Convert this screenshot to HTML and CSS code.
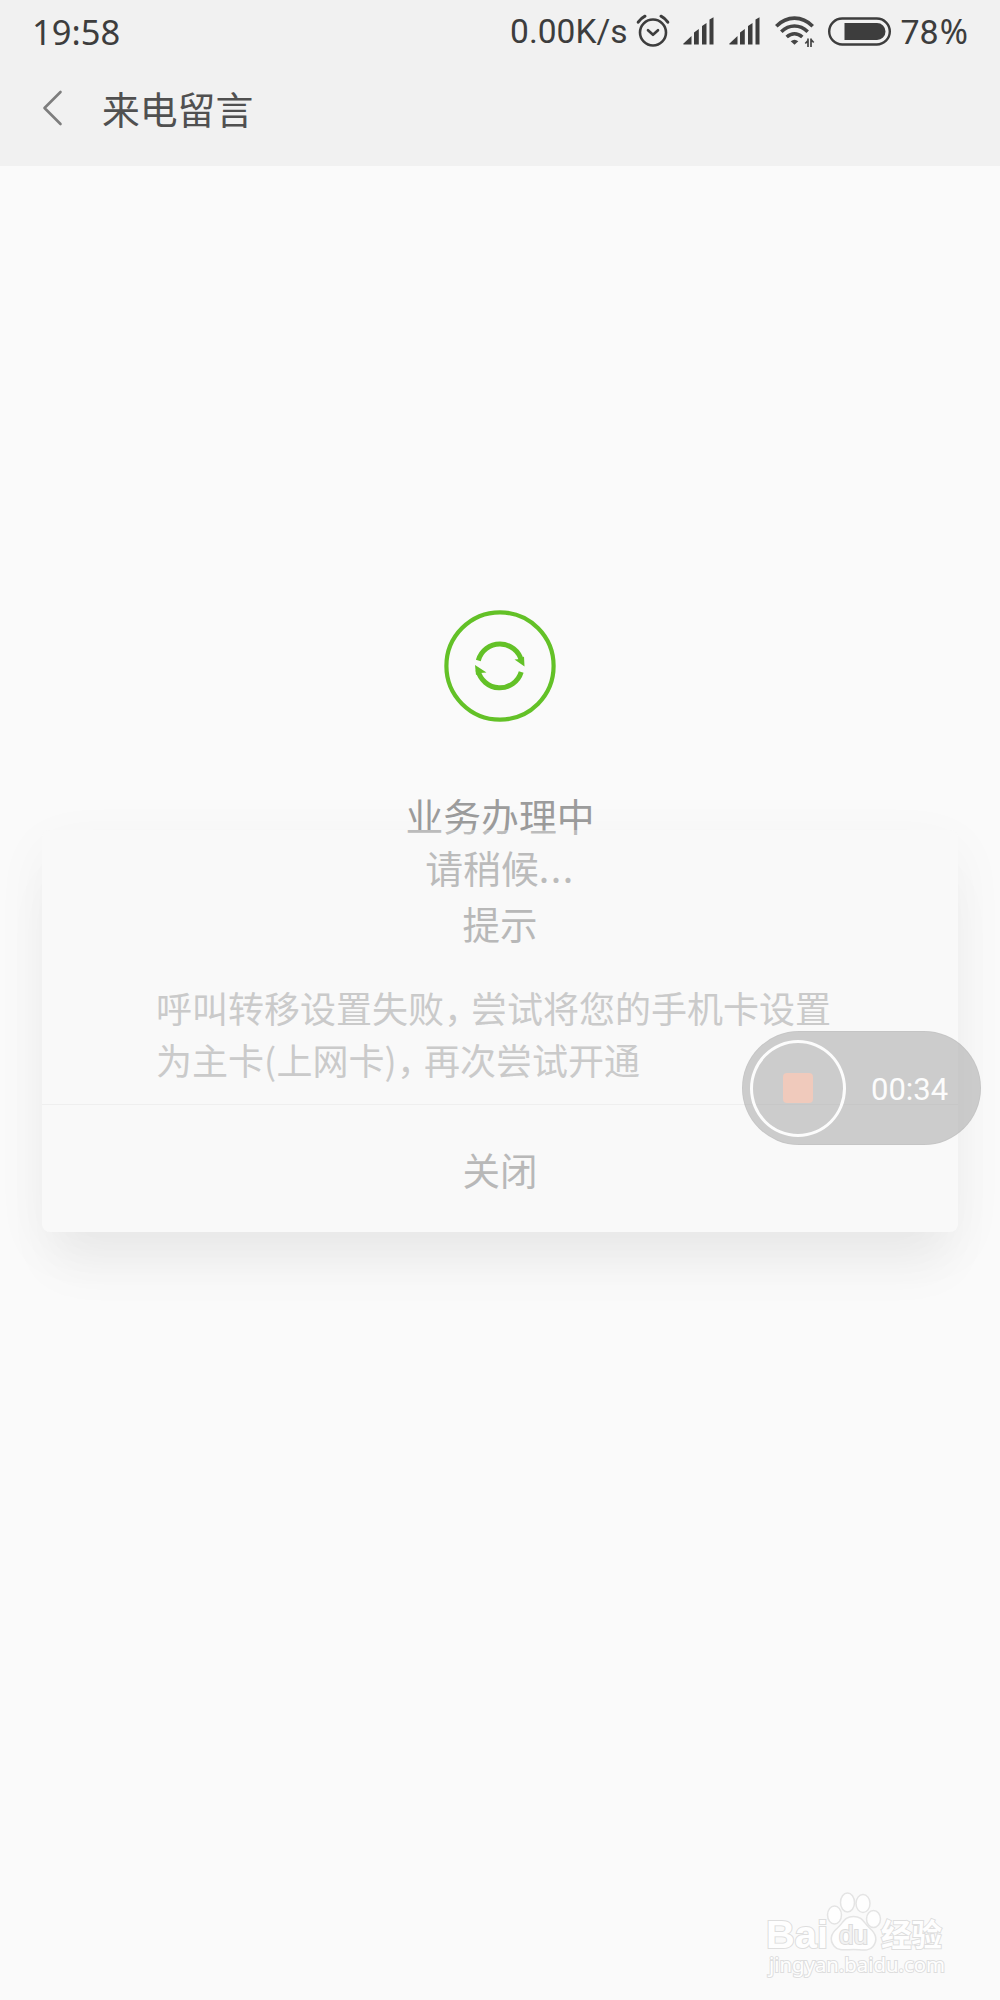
FILE: index.html
```html
<!DOCTYPE html>
<html lang="zh-CN">
<head>
<meta charset="utf-8">
<title>来电留言</title>
<link rel="stylesheet" href="styles.css">
</head>
<body>
<div class="screen">
  <header class="top">
    <div class="status">
      <span class="clock">19:58</span>
      <div class="indicators">
        <span class="speed">0.00K/s</span>
        <svg class="alarm" width="34" height="34" viewBox="0 0 34 34" fill="none" stroke="#3d3d3d" stroke-width="2.6" stroke-linecap="round" stroke-linejoin="round">
          <circle cx="17" cy="18.5" r="13"/>
          <path d="M12 16.2l5 4.600 5-4.600"/>
          <path d="M2.200 8.200q2.800-4 6.800-6M31.800 8.200q-2.800-4-6.800-6" stroke-width="3"/>
        </svg>
        <svg class="signal" width="32" height="28" viewBox="0 0 32 28" fill="#3d3d3d">
          <path d="M0 27l8.500-8v8.500H.8zM11 15.500l4.800-3.500v15.500H11zM19 9l4.500-3v21.500H19zM26.500 2.500L30.500.3v27.200h-4z"/>
        </svg>
        <svg class="signal signal-two" width="32" height="28" viewBox="0 0 32 28" fill="#3d3d3d">
          <path d="M0 27l8.500-8v8.500H.8zM11 15.500l4.800-3.500v15.500H11zM19 9l4.500-3v21.500H19zM26.500 2.500L30.500.3v27.200h-4z"/>
        </svg>
        <svg class="wifi" width="40" height="32" viewBox="0 0 40 32" fill="none" stroke="#454545" stroke-width="3.600">
          <path d="M1.300 10.200C12-.6 27-.6 37.700 10.200M6.300 15.700c7.800-7.600 18.600-7.600 26.400 0M11.700 21c4.900-4.300 10.700-4.300 15.600 0"/>
          <path d="M15.700 25.200q3.800-3 7.600 0l-3.800 3.600z" fill="#454545" stroke="none"/>
          <path d="M30.300 27.500l2.700-3M33 22.500v8.500M36 31v-8.500M36 23.500l2.700 3" stroke-width="1.700"/>
        </svg>
        <svg class="battery" width="64" height="30" viewBox="0 0 64 30">
          <rect x="1.200" y="1.500" width="60.600" height="26" rx="13" fill="none" stroke="#3d3d3d" stroke-width="2.400"/>
          <path d="M16.500 6h32.500a8.500 8.500 0 0 1 0 17H16.500z" fill="#3d3d3d"/>
        </svg>
        <span class="percent">78<span class="sign">%</span></span>
      </div>
    </div>
    <div class="titlebar">
      <svg class="back" width="22" height="38" viewBox="0 0 22 38" fill="none" stroke="#7d7d7d" stroke-width="2.600" stroke-linecap="round" stroke-linejoin="round"><path d="M18.500 3L2.500 19l16 16"/></svg>
      <h1 class="title">来电留言</h1>
    </div>
  </header>

  <main class="progress">
    <svg class="sync" width="112" height="112" viewBox="0 0 112 112">
      <circle cx="56" cy="56" r="53.600" fill="none" stroke="#63c127" stroke-width="4.200"/>
      <g fill="none" stroke="#63c127" stroke-width="5">
        <path d="M34.300 50.500A22.300 22.300 0 0 1 77.500 51"/>
        <path d="M77.200 62A22.300 22.300 0 0 1 34 60"/>
      </g>
      <path d="M80 46.500l.5 10-10-7 6-.5zM31 55l11.500 7.500-6 .5-4.500 2z" fill="#63c127"/>
    </svg>
    <p class="state">业务办理中</p>
    <p class="wait">请稍候<span class="dots">...</span></p>
  </main>

  <section class="dialog">
    <h2 class="dialog-title">提示</h2>
    <p class="message">呼叫转移设置失败<span class="comma">，</span>尝试将您的手机卡设置<br>为主卡<span class="paren">(</span>上网卡<span class="paren">)</span><span class="comma">，</span>再次尝试开通</p>
    <div class="action">关闭</div>
  </section>

  <div class="recorder">
    <span class="stop"><span class="stop-mark"></span></span>
    <span class="elapsed">00:34</span>
  </div>

  <svg class="watermark" width="190" height="100" viewBox="0 0 190 100">
    <g fill="#fefefe" stroke="#e4e4e4" stroke-width="1.500">
      <ellipse cx="74.500" cy="33" rx="7" ry="9"/>
      <ellipse cx="87.500" cy="20.500" rx="7" ry="9.500"/>
      <ellipse cx="103" cy="21.500" rx="7" ry="9"/>
      <ellipse cx="113.500" cy="37" rx="7" ry="8.500"/>
      <path d="M93.500 34.500c-9 0-10 6-16 11.500-7 6-8 12-3.500 18 4 5.500 12 3.500 19.500 3.500s15.500 2.500 19.500-3c4.500-6 3.500-12.500-3.500-18.500-6-5.500-7-11.500-16-11.500z"/>
    </g>
    <g class="mark-text">
      <text x="6" y="66" font-size="38" textLength="62" lengthAdjust="spacingAndGlyphs" font-weight="700">Bai</text>
      <text x="79" y="62" font-size="25" textLength="29" lengthAdjust="spacingAndGlyphs" class="du">du</text>
      <text x="121" y="64" font-size="31" textLength="61" lengthAdjust="spacingAndGlyphs" font-weight="700">经验</text>
      <text x="9" y="90" font-size="20" textLength="176" lengthAdjust="spacingAndGlyphs" class="site">jingyan.baidu.com</text>
    </g>
  </svg>
</div>
</body>
</html>
```
FILE: styles.css
```css
* { box-sizing: border-box; margin: 0; padding: 0; }
body { background: #fafafa; }
.screen {
  position: relative;
  width: 1000px;
  height: 2000px;
  overflow: hidden;
  background: #fafafa;
  font-family: "Noto Sans CJK SC", sans-serif;
  font-weight: 400;
}
.top { height: 166px; background: #f1f1f1; color: #3d3d3d; }
.status {
  display: flex;
  justify-content: space-between;
  align-items: center;
  height: 64px;
  padding: 0 32px 0 32px;
}
.clock { font: 400 34.500px/64px "Noto Sans", sans-serif; }
.indicators { display: flex; align-items: center; }
.speed { font: 400 33.5px/66px Roboto, sans-serif; }
.alarm { margin: -3px 0 0 8px; }
.signal { margin: -3px 0 0 13px; }
.signal-two { margin-left: 14px; }
.wifi { margin: 0 0 0 14px; }
.battery { margin: -1px 0 0 13px; }
.percent { margin-left: 9px; font: 400 34px/64px Roboto, sans-serif; }
.sign { display: inline-block; margin-left: 1px; font-family: "Noto Sans", sans-serif; font-size: 34px; line-height: 34px; }
.titlebar { display: flex; align-items: center; height: 88px; padding-left: 42px; }
.title { margin: 0 0 0 38px; font-size: 37.800px; font-weight: 400; line-height: 54px; color: #505050; }
.progress {
  display: flex;
  flex-direction: column;
  align-items: center;
  padding-top: 444px;
  font-size: 37.800px;
  line-height: 54px;
}
.state { margin-top: 66px; color: #9c9c9c; }
.wait { margin-top: -2px; color: #999; }
.dots { letter-spacing: 1.500px; }
.dialog {
  position: absolute;
  left: 42px;
  top: 830px;
  width: 916px;
  height: 402px;
  border-radius: 8px;
  background: rgba(247, 247, 247, .36);
  box-shadow: 0 44px 50px -10px rgba(0, 0, 0, .044), 0 16px 56px rgba(0, 0, 0, .042);
}
.dialog-title {
  padding-top: 66px;
  font-size: 37.500px;
  font-weight: 400;
  line-height: 54px;
  text-align: center;
  color: #b8b8b8;
}
.message { margin-top: 31px; padding-left: 114px; font-size: 36px; line-height: 52px; color: #cacaca; white-space: nowrap; }
.comma { display: inline-block; width: 27px; font-feature-settings: "halt"; }
.paren { display: inline-block; width: 12.500px; }
.action {
  height: 128px;
  margin-top: 19px;
  border-top: 1px solid #efefef;
  font-size: 37.500px;
  line-height: 127px;
  text-align: center;
  color: #b8b8b8;
}
.recorder {
  position: absolute;
  left: 742px;
  top: 1031px;
  display: flex;
  align-items: center;
  width: 239px;
  height: 114px;
  padding-left: 7px;
  border: 1px solid rgba(0, 0, 0, .03);
  border-radius: 57px;
  background: rgba(160, 160, 160, .5);
}
.stop {
  display: flex;
  align-items: center;
  justify-content: center;
  width: 96px;
  height: 97px;
  border: 3px solid #fcfcfc;
  border-radius: 50%;
}
.stop-mark { width: 30px; height: 30px; border-radius: 4px; background: #f0cabc; }
.elapsed { margin: 3px 0 0 25px; font: 400 31px/40px Roboto, sans-serif; color: #fcfcfc; }
.watermark { position: absolute; left: 760px; top: 1882px; }
.mark-text { fill: #fefefe; stroke: #dedede; stroke-width: 2px; paint-order: stroke; font-family: "Liberation Sans", "Noto Sans CJK SC", sans-serif; }
.du { fill: #f2f2f2; stroke: #dcdcdc; }
.site { font-family: "Noto Sans", sans-serif; font-weight: 400; }
```
